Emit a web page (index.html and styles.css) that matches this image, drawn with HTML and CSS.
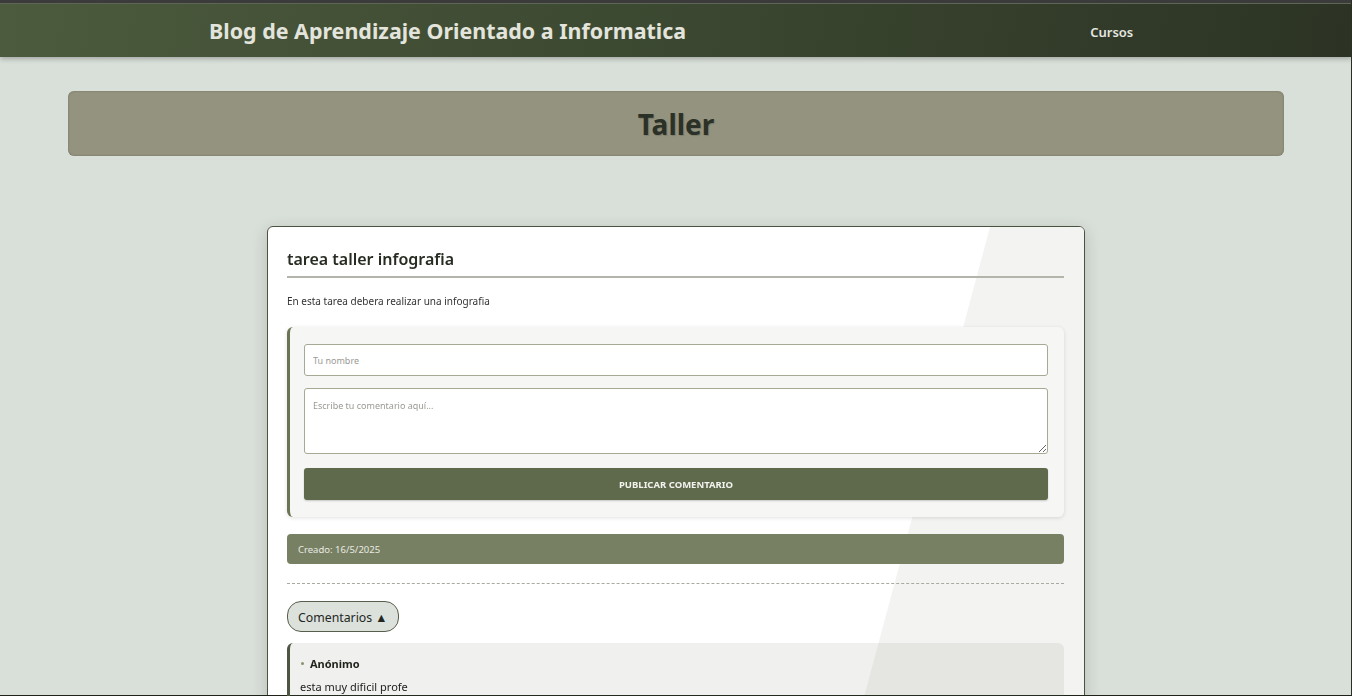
FILE: index.html
```html
<!DOCTYPE html>
<html lang="es">
<head>
<meta charset="utf-8">
<title>Taller</title>
<link rel="stylesheet" href="styles.css">
</head>
<body>
<header class="topbar">
  <div class="topbar-inner">
    <h1 class="brand">Blog de Aprendizaje Orientado a Informatica</h1>
    <nav class="nav"><a class="nav-link" href="#">Cursos</a></nav>
  </div>
</header>
<main class="page">
  <section class="banner"><h2 class="banner-title">Taller</h2></section>
  <article class="card">
    <h3 class="card-title">tarea taller infografia</h3>
    <p class="card-desc">En esta tarea debera realizar una infografia</p>
    <form class="comment-form">
      <input class="field" type="text" placeholder="Tu nombre">
      <textarea class="field area" placeholder="Escribe tu comentario aquí..."></textarea>
      <button class="submit" type="button">PUBLICAR COMENTARIO</button>
    </form>
    <div class="meta">Creado: 16/5/2025</div>
    <hr class="divider">
    <button class="toggle" type="button">Comentarios ▲</button>
    <ul class="comments">
      <li class="comment">
        <div class="comment-author"><span class="dot"></span>Anónimo</div>
        <p class="comment-text">esta muy dificil profe</p>
      </li>
    </ul>
  </article>
</main>
<div class="frame"></div>
</body>
</html>
```
FILE: styles.css
```css
html, body { margin: 0; padding: 0; }
body {
  background: #d9dfd9;
  font-family: "Noto Sans", "Open Sans", sans-serif;
  color: #2b2f26;
  border-top: 3px solid #3b3b3b;
  min-height: 693px;
  box-sizing: border-box;
}
.frame {
  position: fixed;
  inset: 0;
  border-right: 1px solid #2a2f24;
  border-bottom: 1px solid #1e2219;
  pointer-events: none;
}
.topbar {
  height: 54px;
  background: linear-gradient(100deg, #4c5a3d 0%, #3d4a32 45%, #2c3324 100%);
  box-shadow: 0 2px 5px rgba(0,0,0,0.25);
  border-top: 1px solid #5f6655;
  box-sizing: border-box;
}
.topbar-inner {
  display: flex;
  align-items: center;
  height: 100%;
  padding-left: 209px;
}
.brand {
  margin: 0;
  font-size: 21.45px;
  font-weight: 700;
  color: #e3e4dc;
}
.nav { margin-left: 404px; }
.nav-link {
  color: #e6e7e0;
  text-decoration: none;
  font-size: 13px;
  font-weight: 600;
}
.page {
  width: 90%;
  margin: 0 auto;
  padding-top: 34px;
}
.banner {
  height: 65px;
  background: #94937f;
  border-radius: 6px;
  box-shadow: inset 0 0 2px rgba(60,60,40,0.45);
  display: flex;
  align-items: center;
  justify-content: center;
}
.banner-title {
  margin: 0;
  font-size: 28px;
  font-weight: 700;
  color: #2b3126;
  text-shadow: 1px 1px 1px rgba(0,0,0,0.15);
}
.card {
  position: relative;
  overflow: hidden;
  width: 818px;
  box-sizing: border-box;
  margin: 70px auto 0;
  padding: 21px 20px 20px 19px;
  background: #ffffff;
  border: 1px solid #4a5340;
  border-radius: 6px;
  box-shadow: 0 4px 16px rgba(40,50,30,0.18);
}
.card::before {
  content: "";
  position: absolute;
  top: 0;
  bottom: 0;
  left: 722px;
  width: 600px;
  background: #f3f3f1;
  transform: skewX(-15deg);
  transform-origin: top left;
  z-index: 0;
}
.card > * { position: relative; z-index: 1; }
.card-title {
  margin: 0;
  padding-bottom: 6px;
  font-size: 16px;
  font-weight: 600;
  color: #272c22;
  border-bottom: 2px solid #b4b4aa;
}
.card-desc {
  margin: 16px 0 0;
  font-size: 10px;
  color: #333;
}
.comment-form {
  margin-top: 19px;
  display: flex;
  flex-direction: column;
  gap: 12px;
  padding: 17px 16px 17px 14px;
  background: #f6f6f4;
  border-left: 3px solid #6b7553;
  border-radius: 6px;
  box-shadow: 0 1px 4px rgba(0,0,0,0.12);
}
.field {
  box-sizing: border-box;
  width: 100%;
  height: 32px;
  padding: 0 8px;
  font-family: "Noto Sans", sans-serif;
  font-size: 9px;
  color: #333;
  background: #fff;
  border: 1px solid #a7a994;
  border-radius: 3px;
  margin: 0;
}
.field::placeholder { color: #9a9a94; }
.area {
  height: 66px;
  padding: 10px 8px;
  resize: vertical;
  display: block;
}
.submit {
  margin-top: 2px;
  height: 32px;
  background: #5f6a4d;
  color: #f3f3ee;
  border: none;
  border-radius: 3px;
  font-family: "Noto Sans", sans-serif;
  font-weight: 700;
  font-size: 9.5px;
  box-shadow: 0 1px 2px rgba(0,0,0,0.2);
}
.meta {
  margin-top: 17px;
  height: 30px;
  display: flex;
  align-items: center;
  padding-left: 11px;
  background: #778063;
  border-radius: 4px;
  color: #e9eae2;
  font-size: 9.5px;
}
.divider {
  margin: 19px 0 0;
  border: none;
  border-top: 1px dashed #a9a9a4;
}
.toggle {
  margin-top: 17px;
  height: 31px;
  padding: 2px 10px 0;
  background: #dce1db;
  border: 1px solid #575e4c;
  border-radius: 14px;
  font-family: "Noto Sans", sans-serif;
  font-size: 12.3px;
  color: #23271f;
}
.comments {
  list-style: none;
  margin: 11px 0 0;
  padding: 0;
}
.comment {
  padding: 13px 12px 12px 10px;
  background: rgba(110,115,90,0.1);
  border-left: 3px solid #4d5640;
  border-radius: 6px;
}
.comment-author {
  display: flex;
  align-items: center;
  font-size: 11px;
  font-weight: 700;
  color: #1f231b;
}
.dot {
  width: 3px;
  height: 3px;
  border-radius: 50%;
  background: #8a8f70;
  margin: 0 6px 0 1px;
}
.comment-text {
  margin: 8px 0 0;
  font-size: 11px;
  color: #222;
}
```
